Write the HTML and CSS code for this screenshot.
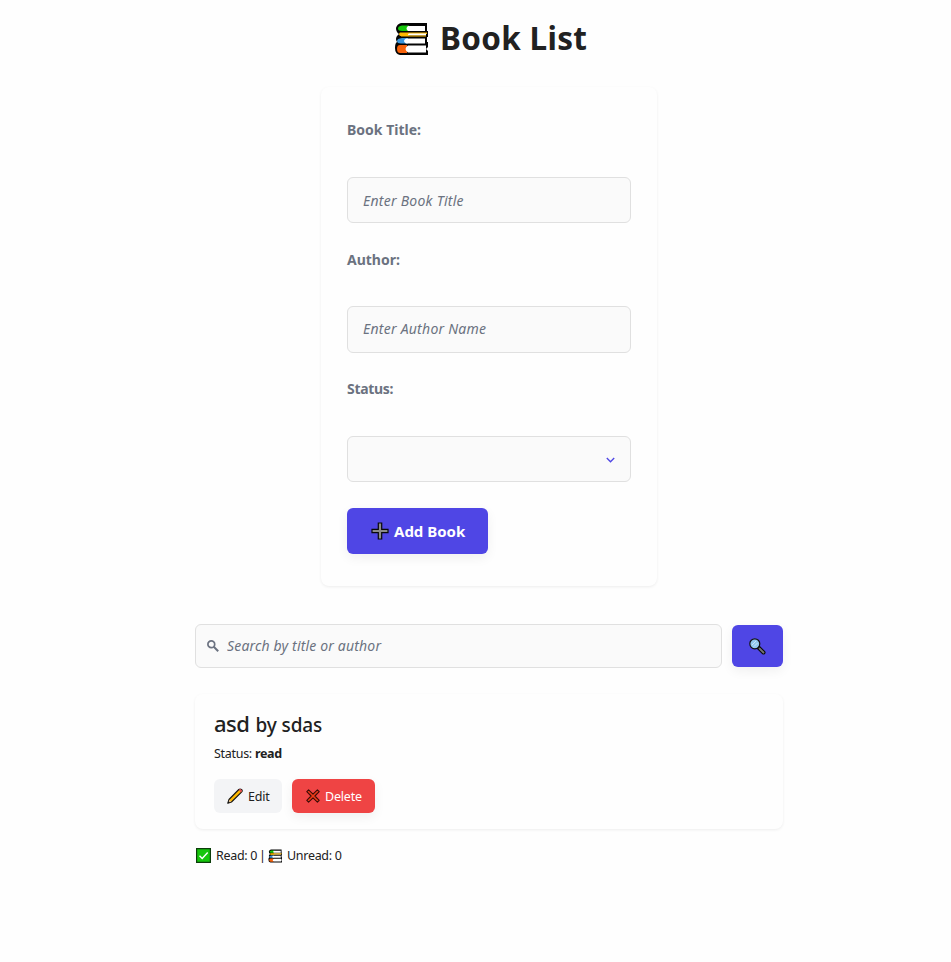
FILE: index.html
```html
<!DOCTYPE html>
<html lang="en">
<head>
<meta charset="utf-8">
<title>Book List</title>
<link rel="stylesheet" href="styles.css">
</head>
<body>
<svg class="sprite" aria-hidden="true">
  <symbol id="books" viewBox="0 0 34 34">
    <path fill="#050505" d="M7 1H33V9H34V15H33V20H34V25L32 27L34 29V33H6Q1 32 1 26Q1 21 3 20Q1 17 3 14L5 12Q2 10 2 6Q3 2 7 1Z"/>
    <path fill="#16c60c" d="M8 3.500H15V9H8Q4 9 4 6.500T8 3.500Z"/>
    <path fill="#fff" d="M14 4H31V9H14Q11 6.500 14 4Z"/>
    <path fill="#ffb900" d="M6 10.500H33V12H15V14H6Q4 12 6 10.500Z"/>
    <path fill="#fff" d="M15 11.500H32V13.500H15Q13 12.500 15 11.500Z"/>
    <path fill="#ffb900" d="M7 13.500H32V14.500H7Z"/>
    <path fill="#3a96dd" d="M8 16H14V21.500H7Q3 21.500 3 19T8 16Z"/>
    <path fill="#fff" d="M12 16.500H31V21.500H12Q8 19 12 16.500Z"/>
    <path fill="#f7630c" d="M6 23H13V31H6Q3 31 3 27T6 23Z"/>
    <path fill="#fff" d="M14 23.500H32V30.500H14Q9 27 14 23.500Z"/>
  </symbol>
</svg>
<main class="page">
  <h1 class="title"><svg class="title-icon"><use href="#books"/></svg><span>Book List</span></h1>

  <form class="book-form">
    <label class="label" for="title">Book Title:</label>
    <input class="field" id="title" placeholder="Enter Book Title">
    <label class="label" for="author">Author:</label>
    <input class="field field-author" id="author" placeholder="Enter Author Name">
    <label class="label label-status">Status:</label>
    <div class="field select">
      <svg class="chevron" viewBox="0 0 8 5"><path d="M.7.7 4 4 7.300.7" fill="none" stroke="#4f46e5" stroke-width="1.200"/></svg>
    </div>
    <button class="btn primary add" type="button">
      <svg class="plus" viewBox="0 0 18 18"><path d="M7.300 1h3.400v6.300H17v3.400h-6.300V17H7.300v-6.300H1V7.300h6.300z" fill="#8a8a8a" stroke="#080808" stroke-width="1.200"/></svg>
      <span>Add Book</span>
    </button>
  </form>

  <div class="search-row">
    <div class="search-box">
      <svg class="search-icon" viewBox="0 0 12 12"><circle cx="4.300" cy="4.300" r="3.400" fill="none" stroke="#6b7280" stroke-width="1.700"/><path d="M6.800 6.800 11.200 11.200" stroke="#6b7280" stroke-width="2"/></svg>
      <input class="search-input" placeholder="Search by title or author">
    </div>
    <button class="btn primary search-btn" type="button" aria-label="Search">
      <svg class="lens" viewBox="0 0 17 17"><path d="M9 9 14.500 14.500" stroke="#080808" stroke-width="4" stroke-linecap="round"/><path d="M10.500 10.500 14.500 14.500" stroke="#767676" stroke-width="1.800" stroke-linecap="round"/><circle cx="5.800" cy="5.800" r="5" fill="#92c9ee" stroke="#111" stroke-width="1.200"/><path d="M3 7 7 3M5 8.500 8.500 5" stroke="#c9e8fb" stroke-width="1"/></svg>
    </button>
  </div>

  <section class="item">
    <h2 class="item-title"><span class="item-name">asd</span> <span class="item-author">by sdas</span></h2>
    <p class="item-status"><span>Status:</span> <strong>read</strong></p>
    <div class="actions">
      <button class="btn edit" type="button">
        <svg class="pencil" viewBox="0 0 16 16"><path d="M.8 15.200 2 11.500 11.800 1.500Q13 .4 14.500 1.500T14.500 4.200L4.500 14Z" fill="#ffb900" stroke="#151515" stroke-width="1.100" stroke-linejoin="round"/><path d="M11.800 2 13 1Q15.500 1.500 14.500 4L14 4.500Z" fill="#e74856"/><path d="M1.500 14.500 2.500 11.800 4.200 13.500Z" fill="#dfc0a0"/><path d="M.5 15.500 1.500 13.200 2.800 14.500Z" fill="#111"/></svg>
        <span>Edit</span>
      </button>
      <button class="btn delete" type="button">
        <svg class="cross" viewBox="0 0 14 14"><path d="M2.600.8 7 5.100 11.400.8 13.200 2.600 8.900 7 13.200 11.400 11.400 13.200 7 8.900 2.600 13.200.8 11.400 5.100 7 .8 2.600Z" fill="#f03a17" stroke="#3a0c08" stroke-width="1.100" stroke-linejoin="round"/></svg>
        <span>Delete</span>
      </button>
    </div>
  </section>

  <footer class="stats">
    <svg class="check" viewBox="0 0 15 15"><path d="M.6.6H14.400V14.400H.6Z" fill="#16c60c" stroke="#0b3d0a" stroke-width="1.200"/><path d="M3.500 7.800 6.200 10.500 11.700 4.500" fill="none" stroke="#fff" stroke-width="1.400"/></svg>
    <span class="read">Read: 0</span><span class="bar">|</span>
    <svg class="stat-books"><use href="#books"/></svg>
    <span class="unread">Unread: 0</span>
  </footer>
</main>
</body>
</html>
```
FILE: styles.css
```css
* { box-sizing: border-box; }
body {
  margin: 0;
  background: #fefefe;
  color: #212121;
  font-family: "Noto Sans", "Open Sans", sans-serif;
}
svg { display: block; flex: none; }
.sprite { position: absolute; width: 0; height: 0; }
h1, h2, p { margin: 0; }
.page { width: 588px; margin-left: 195px; padding-top: 15px; }
.title {
  display: flex;
  align-items: center;
  height: 46px;
  margin-left: 199px;
  font-size: 31.5px;
  line-height: 46px;
  letter-spacing: .3px;
  white-space: nowrap;
}
.title-icon { width: 34px; height: 34px; margin: 2px 12px 0 0; }

.book-form {
  display: flex;
  flex-direction: column;
  width: 336px;
  height: 499px;
  margin: 26px 0 0 126px;
  padding: 33px 26px 32px;
  border-radius: 8px;
  background: #fefefe;
  box-shadow: 0 1px 3px rgba(0, 0, 0, .07);
}
.label {
  flex: none;
  height: 20px;
  margin-bottom: 37px;
  color: #6b7280;
  font-size: 14px;
  line-height: 20px;
  font-weight: 700;
}
.label-status { letter-spacing: -.3px; }
.field {
  flex: none;
  width: 284px;
  height: 46px;
  margin-bottom: 27px;
  padding: 0 15px;
  border: 1px solid #e0e0e0;
  border-radius: 6px;
  background: #fafafa;
  font: 14px "Noto Sans", sans-serif;
  letter-spacing: .25px;
}
.field-author { height: 47px; margin: -1px 0 26px; padding-bottom: 2px; }
.select {
  display: flex;
  align-items: center;
  justify-content: flex-end;
  margin-bottom: 26px;
}
.chevron { width: 9px; height: 6px; margin-top: 1px; }
input::placeholder { color: #6b7280; font-style: italic; opacity: 1; }

.btn {
  display: flex;
  flex: none;
  align-items: center;
  padding: 0;
  border: 0;
  border-radius: 6px;
  font-family: inherit;
  white-space: nowrap;
}
.primary { background: #4f46e5; color: #fff; box-shadow: 0 4px 12px rgba(0, 0, 0, .06); }
.add { width: 141px; height: 46px; padding-left: 24px; font-size: 15px; font-weight: 700; }
.plus { width: 18px; height: 18px; margin-right: 5px; }

.search-row { display: flex; align-items: center; gap: 10px; margin-top: 38px; }
.search-box {
  display: flex;
  align-items: center;
  width: 527px;
  height: 44px;
  padding-left: 11px;
  border: 1px solid #e0e0e0;
  border-radius: 6px;
  background: #fafafa;
}
.search-icon { width: 12px; height: 12px; margin-right: 8px; }
.search-input {
  flex: 1;
  padding: 0 0 1px;
  border: 0;
  background: none;
  font: 14px "Noto Sans", sans-serif;
  letter-spacing: .17px;
}
.search-btn { width: 51px; height: 42px; justify-content: center; }
.lens { width: 17px; height: 17px; }

.item {
  height: 135px;
  margin-top: 26px;
  padding: 16px 19px;
  border-radius: 8px;
  box-shadow: 0 1px 3px rgba(0, 0, 0, .07);
}
.item-title {
  display: flex;
  align-items: baseline;
  gap: 6px;
  height: 33px;
  line-height: 27px;
  font-weight: 500;
}
.item-name { font-size: 22px; letter-spacing: -.5px; }
.item-author { font-size: 19px; letter-spacing: -.1px; }
.item-status {
  display: flex;
  gap: 3px;
  height: 21px;
  font-size: 12.5px;
  line-height: 22px;
  letter-spacing: -.3px;
}
.actions { display: flex; gap: 10px; margin-top: 15px; }
.edit, .delete { height: 34px; font-size: 12.5px; letter-spacing: -.2px; }
.edit { width: 68px; padding-left: 13px; background: #f3f4f6; color: #212121; }
.delete {
  width: 83px;
  padding-left: 14px;
  background: #ef4444;
  color: #fff;
  box-shadow: 0 4px 12px rgba(0, 0, 0, .06);
}
.pencil { width: 16px; height: 16px; margin-right: 5px; }
.cross { width: 14px; height: 14px; margin-right: 5px; }

.stats {
  display: flex;
  align-items: center;
  height: 20px;
  margin-top: 17px;
  padding-left: 1px;
  font-size: 12.5px;
  line-height: 20px;
  letter-spacing: -.3px;
}
.check { width: 15px; height: 15px; margin: -1px 5px 0 0; }
.read { width: 43px; }
.bar { width: 9px; }
.stat-books { width: 14px; height: 14px; margin-right: 5px; }
```
